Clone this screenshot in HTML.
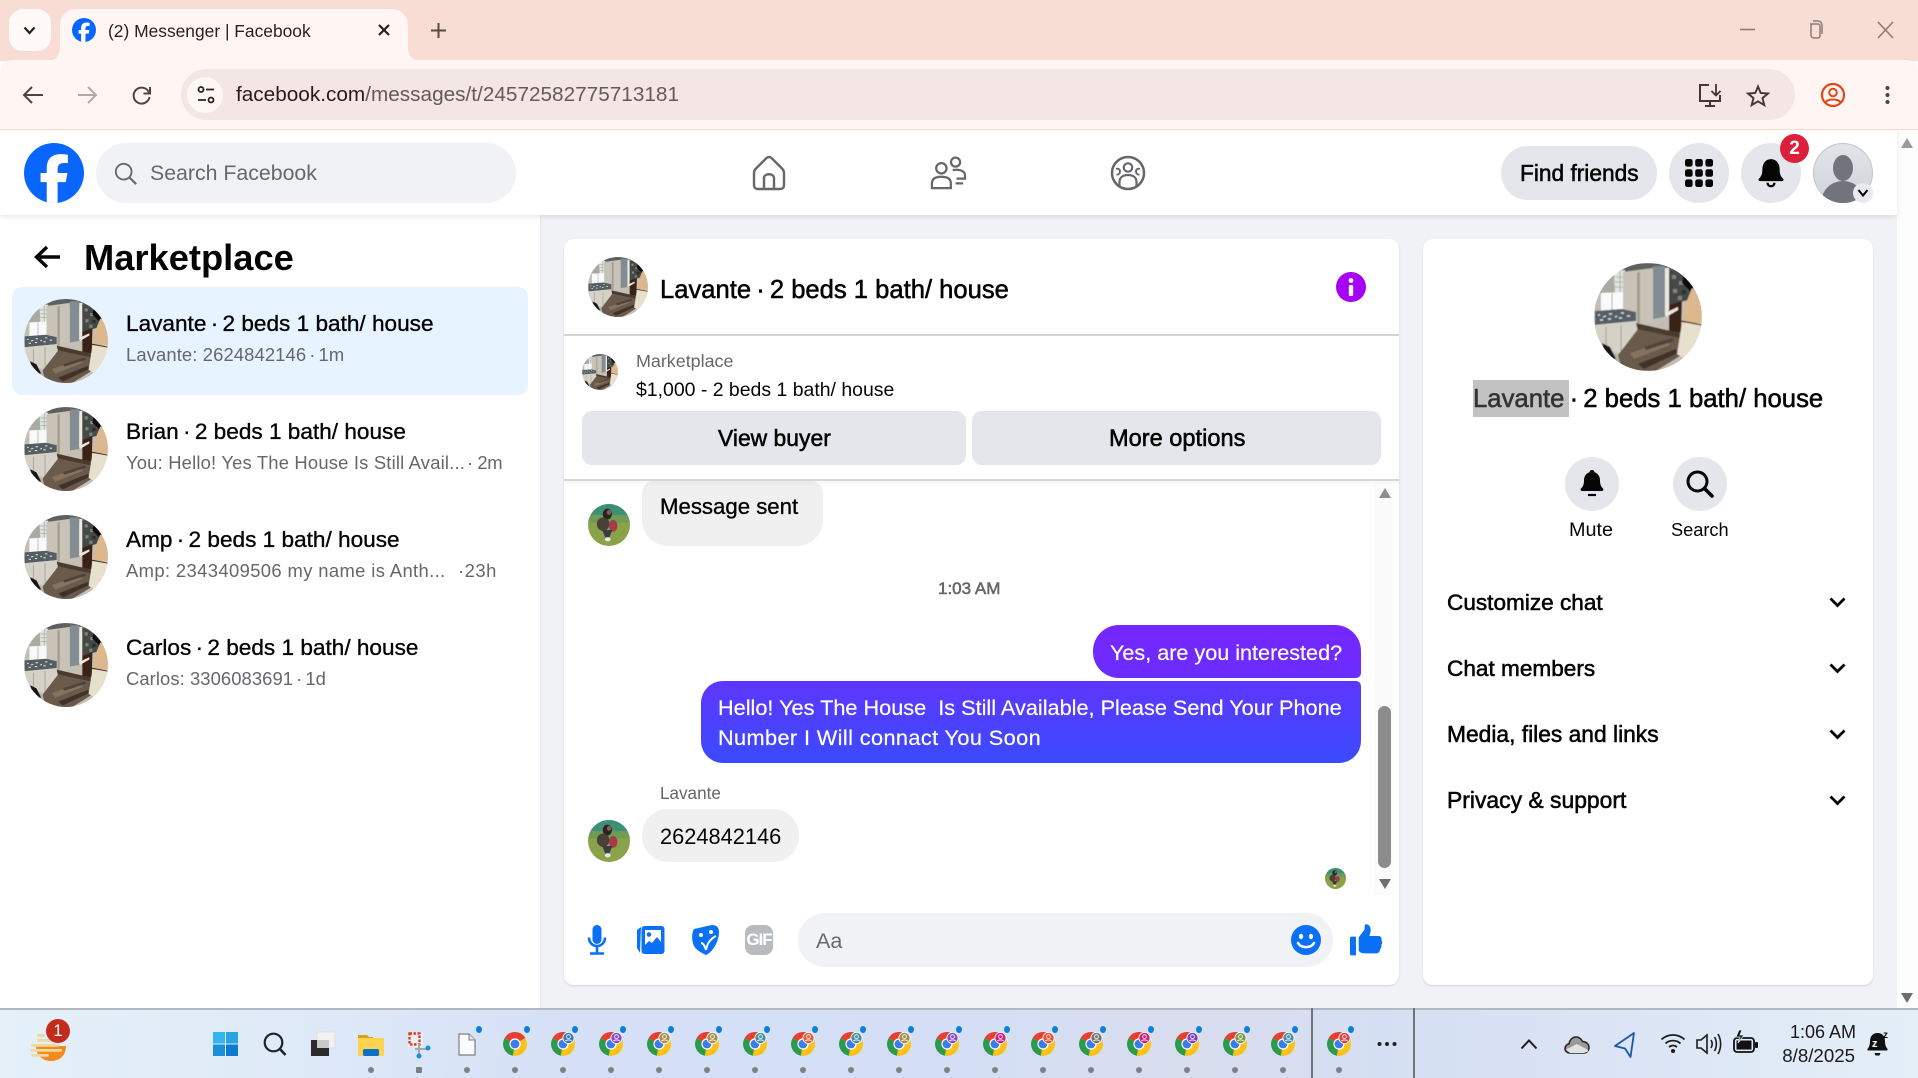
<!DOCTYPE html>
<html lang="en"><head><meta charset="utf-8"><title>(2) Messenger | Facebook</title>
<style>
html,body{margin:0;padding:0;width:1918px;height:1078px;overflow:hidden;background:#fff;font-family:"Liberation Sans",Arial,sans-serif;color:#050505}
.a{position:absolute}
.t{position:absolute;white-space:nowrap;line-height:1}
.m{-webkit-text-stroke:.35px currentColor}
.s{-webkit-text-stroke:.55px currentColor}
.w{-webkit-text-stroke:.2px currentColor}
.g{color:#65676b}
i.dt{font-style:normal;margin:0 -2px}
svg{position:absolute;overflow:visible}
.r{border-radius:50%}
.d{position:absolute;top:1067px;width:6px;height:6px;border-radius:50%;background:#7d8088}
.b{position:absolute;top:1026px;width:6px;height:7px;border-radius:50%;background:#0f7fdc}
.ch{position:absolute;top:1032px;width:24px;height:24px}
</style></head><body>
<svg width="0" height="0" style="position:absolute"><defs>
<clipPath id="cc"><circle cx="54" cy="54" r="54"/></clipPath>
<clipPath id="cw"><circle cx="50" cy="50" r="50"/></clipPath>
<filter id="soft" x="0" y="0" width="100%" height="100%"><feGaussianBlur stdDeviation=".45"/></filter>
<symbol id="house" viewBox="0 0 108 108"><g clip-path="url(#cc)"><g filter="url(#soft)">
<rect width="108" height="108" fill="#c4bfb4"/>
<rect width="108" height="10" fill="#5c6061"/>
<polygon points="0,0 29,0 29,32 0,30" fill="#a8aaa3"/>
<polygon points="20,9 31,7 31,32 21,31" fill="#dfe5df"/>
<path d="M21 14h10M21 19h10M21 24h10M26 8v24" stroke="#9aa69e" stroke-width=".8"/>
<polygon points="7,30 30,29 30,48 7,51" fill="#fafafa"/>
<path d="M18 30v20" stroke="#999" stroke-width=".8"/>
<polygon points="29,9 59,5 59,60 42,62 29,56" fill="#c9c2b6"/>
<polygon points="43,10 46,9 46,60 43,60" fill="#a39d91"/>
<polygon points="59,3 71,3 71,54 59,56" fill="#838c92"/>
<polygon points="71,5 75,5 75,46 71,52" fill="#ece9e2"/>
<polygon points="75,7 98,8 98,36 75,42" fill="#454945"/>
<polygon points="78,12 82,12 82,16 78,16" fill="#7e847d"/><polygon points="85,18 89,18 89,22 85,22" fill="#7e847d"/><polygon points="79,26 83,26 83,30 79,30" fill="#80867f"/><polygon points="88,27 92,27 92,31 88,31" fill="#2b2e2b"/><polygon points="84,33 88,33 88,37 84,37" fill="#7e847d"/>
<polygon points="90,8 102,18 98,30 88,20" fill="#0d0e10"/>
<polygon points="75,42 88,38 87,70 75,68" fill="#3a2417"/>
<polygon points="71,50 84,44 84,47 72,54" fill="#ece9e2"/>
<polygon points="1,48 28,46 42,49 42,58 1,62" fill="#555e63"/>
<path d="M4 52l2 0M9 54l3-1M15 51l3 0M21 54l2-1M27 50l3 0M33 53l3 0M6 57l3 0M14 56l3 0M25 55l3 0" stroke="#d9dfe2" stroke-width="1.400"/>
<polygon points="0,62 42,58 45,78 28,90 10,88 0,76" fill="#d6d1c6"/>
<path d="M12 64v22M27 62v26" stroke="#a09c91" stroke-width="1"/>
<polygon points="0,76 16,88 28,96 26,108 0,108" fill="#b4afa3"/>
<polygon points="42,60 86,70 86,78 44,68" fill="#4a3a2f"/>
<polygon points="24,92 44,66 86,75 86,93 62,108 28,108" fill="#6b5a4b"/>
<polygon points="36,90 72,78 76,82 40,96" fill="#86735f"/>
<polygon points="44,101 82,86 84,90 50,106" fill="#3f332a"/>
<polygon points="50,84 78,75 80,78 52,87" fill="#50423a"/>
<polygon points="98,25 108,32 108,60 88,60 92,40" fill="#dcb88f"/>
<polygon points="88,60 108,60 108,92 92,97 83,91" fill="#e6e0cd"/>
<line x1="87" y1="58" x2="108" y2="62" stroke="#2a2a26" stroke-width="1.200"/>
<polygon points="8,80 16,84 22,96 12,96" fill="#161616"/>
</g></g></symbol>
<symbol id="woman" viewBox="0 0 100 100"><g clip-path="url(#cw)">
<rect width="100" height="100" fill="#8aa248"/>
<rect width="100" height="32" fill="#3e8f78"/>
<rect y="26" width="100" height="18" fill="#6f9b55"/>
<ellipse cx="46" cy="24" rx="11" ry="13" fill="#2a2225"/>
<ellipse cx="50" cy="20" rx="5" ry="6" fill="#8a5f48"/>
<ellipse cx="36" cy="48" rx="15" ry="16" fill="#4a4038"/>
<ellipse cx="60" cy="52" rx="10" ry="14" fill="#a63a4a"/>
<polygon points="34,62 58,62 50,82 42,82" fill="#3b3b45"/>
<ellipse cx="47" cy="84" rx="7" ry="5" fill="#e8e8e8"/>
</g></symbol>
<symbol id="chrome" viewBox="0 0 24 24">
<path d="M12 12 1.600 6A12 12 0 0 1 22.400 6Z" fill="#e5402f"/>
<path d="M12 12 1.600 6A12 12 0 0 0 10 23.800Z" fill="#2c9a4b"/>
<path d="M12 12 22.400 6A12 12 0 0 1 10 23.800Z" fill="#fbc21b"/>
<circle cx="12" cy="12" r="5.600" fill="#fff"/><circle cx="12" cy="12" r="4.400" fill="#3b7de8"/>
</symbol>
<symbol id="pp" viewBox="0 0 12 12"><circle cx="6" cy="6" r="6" fill="#fff"/><circle cx="6" cy="6" r="5.200" fill="currentColor"/><circle cx="6" cy="4.600" r="1.900" fill="none" stroke="#fff" stroke-width=".8"/><path d="M2.900 9.200c.6-1.700 5.600-1.700 6.200 0" fill="none" stroke="#fff" stroke-width=".8"/></symbol>
</defs></svg>

<!-- tab strip -->
<div class="a" style="left:0;top:0;width:1918px;height:61px;background:#f8ddd4"></div>
<div class="a" style="left:9px;top:9px;width:42px;height:42px;border-radius:14px;background:#fff9f7"></div>
<svg style="left:22px;top:23px" width="15" height="15" viewBox="0 0 15 15"><path d="M2.500 4.500 7.500 10l5-5.500" fill="none" stroke="#2b1f1b" stroke-width="2.200"/></svg>
<div class="a" style="left:60px;top:9px;width:348px;height:52px;background:#fff5f2;border-radius:16px 16px 0 0"></div>
<svg style="left:46px;top:46px" width="376" height="15" viewBox="0 0 376 15"><path d="M0 15C10 15 14 10 14 0V15Z" fill="#fff5f2"/><path d="M376 15C366 15 362 10 362 0V15Z" fill="#fff5f2"/></svg>
<svg style="left:72px;top:18px" width="24" height="24" viewBox="0 0 36 36"><circle cx="18" cy="18" r="18" fill="#0866ff"/><path d="M25.040 23.500 26.050 18h-5.880v-1.940c0-2.910 1.140-4.030 4.090-4.030.92 0 1.650.02 2.080.07V7.120c-.8-.23-2.770-.45-3.910-.45-6.020 0-8.790 2.830-8.790 8.960V18H9.940v5.500h3.710v11.970c1.390.35 2.850.53 4.350.53.73 0 1.450-.05 2.170-.13V23.500z" fill="#fff"/></svg>
<div class="t" style="left:108px;top:23px;font-size:17.400px;color:#2b1f1b">(2) Messenger | Facebook</div>
<svg style="left:377px;top:23px" width="14" height="14" viewBox="0 0 14 14"><path d="M2 2 12 12M12 2 2 12" stroke="#2b1f1b" stroke-width="2.200"/></svg>
<svg style="left:430px;top:22px" width="17" height="17" viewBox="0 0 17 17"><path d="M8.500 1v15M1 8.500h15" stroke="#5a4a45" stroke-width="2"/></svg>
<svg style="left:1738px;top:20px" width="150" height="20" viewBox="0 0 150 20">
<path d="M2 9.500h15" stroke="#8a7d79" stroke-width="1.600"/>
<path d="M72 4h8a2 2 0 0 1 2 2v10a2 2 0 0 1-2 2h-4a3 3 0 0 1-3-3V6a2 2 0 0 1 2-2z" fill="none" stroke="#8a7d79" stroke-width="1.500"/><path d="M75 1h5a4 4 0 0 1 4 4v9" fill="none" stroke="#8a7d79" stroke-width="1.500"/>
<path d="M140 2 155 18M155 2 140 18" stroke="#8a7d79" stroke-width="1.600"/></svg>

<!-- toolbar -->
<div class="a" style="left:0;top:60px;width:1918px;height:69px;background:#fff5f2;border-radius:12px 12px 0 0;border-bottom:1.500px solid #f8ddd4"></div>
<svg style="left:21px;top:83px" width="134" height="24" viewBox="0 0 134 24">
<path d="M22 12H4M11 4l-8 8 8 8" fill="none" stroke="#54433d" stroke-width="2"/>
<path d="M57 12h18M67 4l8 8-8 8" fill="none" stroke="#b5a8a3" stroke-width="2"/>
<path d="M128 9.500A8 8 0 1 0 128.500 14" fill="none" stroke="#54433d" stroke-width="2"/><path d="M129 4v6.500h-6.500" fill="none" stroke="#54433d" stroke-width="2"/></svg>
<div class="a" style="left:181px;top:69px;width:1614px;height:51px;border-radius:26px;background:#f3e6e4"></div>
<div class="a r" style="left:187px;top:77px;width:36px;height:36px;background:#fff7f5"></div>
<svg style="left:196px;top:85px" width="20" height="20" viewBox="0 0 20 20"><circle cx="5" cy="4.500" r="2.500" fill="none" stroke="#2b1f1b" stroke-width="1.800"/><path d="M10 4.500h8M2 15h8" stroke="#2b1f1b" stroke-width="1.800"/><circle cx="15" cy="15" r="2.500" fill="none" stroke="#2b1f1b" stroke-width="1.800"/></svg>
<div class="t" style="left:236px;top:85px;font-size:20.750px;color:#655a57"><span style="color:#281c18">facebook.com</span>/messages/t/24572582775713181</div>
<svg style="left:1698px;top:83px" width="200" height="26" viewBox="0 0 200 26">
<path d="M11 2H2v16h20v-6M12 18v4M7 23h10" fill="none" stroke="#45362f" stroke-width="2"/><path d="M18 1v11M13.500 8l4.500 4.500L22.500 8" fill="none" stroke="#45362f" stroke-width="1.800"/>
<path d="M60 3.500 62.700 10l7.300.5-5.500 4.600 1.800 7-6.300-3.800-6.300 3.800 1.800-7-5.500-4.600 7.300-.5z" fill="none" stroke="#45362f" stroke-width="1.900"/>
<circle cx="135" cy="12" r="11" fill="none" stroke="#e0481a" stroke-width="2.200"/><circle cx="135" cy="9.500" r="3.800" fill="none" stroke="#e0481a" stroke-width="2"/><path d="M127.500 19.500c1.500-4 13.500-4 15 0" fill="none" stroke="#e0481a" stroke-width="2"/>
<circle cx="189.500" cy="5" r="2" fill="#54433d"/><circle cx="189.500" cy="12" r="2" fill="#54433d"/><circle cx="189.500" cy="19" r="2" fill="#54433d"/></svg>

<!-- body -->
<div class="a" style="left:0;top:130px;width:1897px;height:878px;background:#f1f2f6"></div>
<div class="a" style="left:1897px;top:130px;width:21px;height:878px;background:#fdfdfd"></div>
<svg style="left:1900px;top:137px" width="14" height="12" viewBox="0 0 14 12"><path d="M7 1 13 11H1z" fill="#9a9a9a"/></svg>
<svg style="left:1900px;top:992px" width="14" height="12" viewBox="0 0 14 12"><path d="M7 11 13 1H1z" fill="#6d6d6d"/></svg>

<!-- sidebar -->
<div class="a" style="left:0;top:215px;width:540px;height:793px;background:#fff;border-right:1px solid #e4e6eb"></div>
<!-- fb header -->
<div class="a" style="left:0;top:130px;width:1897px;height:85px;background:#fff;box-shadow:0 2px 5px rgba(0,0,0,.09)"></div>
<svg style="left:24px;top:143px" width="60" height="60" viewBox="0 0 36 36"><circle cx="18" cy="18" r="18" fill="#0866ff"/><path d="M25.040 23.500 26.050 18h-5.880v-1.940c0-2.910 1.140-4.030 4.090-4.030.92 0 1.650.02 2.080.07V7.120c-.8-.23-2.770-.45-3.910-.45-6.020 0-8.790 2.830-8.790 8.960V18H9.940v5.500h3.710v11.970c1.390.35 2.850.53 4.350.53.73 0 1.450-.05 2.170-.13V23.500z" fill="#fff"/></svg>
<div class="a" style="left:96px;top:143px;width:420px;height:60px;border-radius:30px;background:#f0f2f5"></div>
<svg style="left:114px;top:162px" width="24" height="24" viewBox="0 0 26 26"><circle cx="10.500" cy="10.500" r="8.500" fill="none" stroke="#65676b" stroke-width="2"/><path d="M16.500 16.500 24 24" stroke="#65676b" stroke-width="2.400"/></svg>
<div class="t g" style="left:150px;top:163px;font-size:21.300px">Search Facebook</div>
<svg style="left:752px;top:155px" width="34" height="36" viewBox="0 0 34 36"><path d="M17 2c-1 0-2 .6-3 1.500L4 13.500C2.500 15 2 16 2 18v12c0 2.800 1.700 4 4 4h22c2.300 0 4-1.200 4-4V18c0-2-.5-3-2-4.500L20 3.500C19 2.600 18 2 17 2z" fill="none" stroke="#65676b" stroke-width="2.400"/><path d="M12 34V23c0-5 10-5 10 0v11" fill="none" stroke="#65676b" stroke-width="2.400"/></svg>
<svg style="left:930px;top:156px" width="36" height="34" viewBox="0 0 38 36"><circle cx="12" cy="13" r="5.500" fill="none" stroke="#65676b" stroke-width="2.400"/><path d="M2 34V29c0-5 4-7 10-7s10 2 10 7v5z" fill="none" stroke="#65676b" stroke-width="2.400"/><circle cx="27" cy="6.500" r="4.800" fill="none" stroke="#65676b" stroke-width="2.400"/><path d="M24 15c3-.8 13-1 13 5.500V24h-9M27 29h8" fill="none" stroke="#65676b" stroke-width="2.400"/></svg>
<svg style="left:1110px;top:155px" width="36" height="36" viewBox="0 0 36 36"><circle cx="18" cy="18" r="16" fill="none" stroke="#65676b" stroke-width="2.500"/><circle cx="18" cy="12.500" r="4.200" fill="none" stroke="#65676b" stroke-width="2.200"/><path d="M6 14c2.500-1 4 .5 4 2.500s-1.500 3.500-3.500 3M30 14c-2.500-1-4 .5-4 2.500s1.500 3.500 3.500 3" fill="none" stroke="#65676b" stroke-width="1.900"/><path d="M9.500 31v-4c0-5 4-7 8.500-7s8.500 2 8.500 7v4" fill="none" stroke="#65676b" stroke-width="2.200"/></svg>
<div class="a" style="left:1501px;top:146px;width:156px;height:54px;border-radius:27px;background:#e4e6eb"></div>
<div class="t s" style="left:1520px;top:162px;font-size:22.700px">Find friends</div>
<div class="a r" style="left:1669px;top:143px;width:60px;height:60px;background:#e4e6eb"></div>
<svg style="left:1685px;top:159px" width="28" height="28" viewBox="0 0 28 28" fill="#050505"><rect x="0" y="0" width="7.600" height="7.600" rx="2.200"/><rect x="10.200" y="0" width="7.600" height="7.600" rx="2.200"/><rect x="20.400" y="0" width="7.600" height="7.600" rx="2.200"/><rect x="0" y="10.200" width="7.600" height="7.600" rx="2.200"/><rect x="10.200" y="10.200" width="7.600" height="7.600" rx="2.200"/><rect x="20.400" y="10.200" width="7.600" height="7.600" rx="2.200"/><rect x="0" y="20.400" width="7.600" height="7.600" rx="2.200"/><rect x="10.200" y="20.400" width="7.600" height="7.600" rx="2.200"/><rect x="20.400" y="20.400" width="7.600" height="7.600" rx="2.200"/></svg>
<div class="a r" style="left:1741px;top:143px;width:60px;height:60px;background:#e4e6eb"></div>
<svg style="left:1757px;top:158px" width="28" height="30" viewBox="0 0 24 26"><path d="M12 1c4.800 0 7.500 4 7.500 9 0 4 1 6 3 8 .7.800.2 2-.8 2H2.300c-1 0-1.500-1.200-.8-2 2-2 3-4 3-8 0-5 2.700-9 7.500-9z" fill="#050505"/><path d="M9 21.500a3 3 0 0 0 6 0" fill="none" stroke="#050505" stroke-width="2"/></svg>
<div class="a r" style="left:1780px;top:134px;width:29px;height:29px;background:#dd1f3c;color:#fff;font-weight:bold;font-size:19px;line-height:29px;text-align:center">2</div>
<div class="a r" style="left:1813px;top:143px;width:60px;height:60px;background:linear-gradient(180deg,#e2e5e8,#cfd3d8);box-shadow:inset 0 0 0 1px #c4c7cb;overflow:hidden"><div class="a r" style="left:20px;top:12px;width:20px;height:26px;background:#71747a"></div><div class="a" style="left:8px;top:38px;width:44px;height:30px;border-radius:22px 22px 0 0;background:#71747a"></div></div>
<div class="a r" style="left:1853px;top:183px;width:20px;height:20px;background:#e8eaed"></div>
<svg style="left:1857px;top:188px" width="12" height="10" viewBox="0 0 12 10"><path d="M1.500 2 6 7.500 10.500 2" fill="none" stroke="#050505" stroke-width="2"/></svg>

<!-- left list -->
<svg style="left:33px;top:243px" width="28" height="28" viewBox="0 0 28 28"><path d="M27 14H4M14 4 3.500 14 14 24" fill="none" stroke="#050505" stroke-width="3.400"/></svg>
<div class="t" style="left:84px;top:240px;font-size:36.300px;font-weight:bold">Marketplace</div>
<div class="a" style="left:12px;top:287px;width:516px;height:108px;border-radius:10px;background:#e7f3ff"></div>
<svg style="left:24px;top:299px" width="84" height="84"><use href="#house" width="84" height="84"/></svg>
<svg style="left:24px;top:407px" width="84" height="84"><use href="#house" width="84" height="84"/></svg>
<svg style="left:24px;top:515px" width="84" height="84"><use href="#house" width="84" height="84"/></svg>
<svg style="left:24px;top:623px" width="84" height="84"><use href="#house" width="84" height="84"/></svg>
<div class="t m" style="left:126px;top:313px;font-size:22.600px">Lavante <i class="dt">·</i> 2 beds 1 bath/ house</div>
<div class="t g" style="left:126px;top:346px;font-size:18.400px;letter-spacing:.12px">Lavante: 2624842146<span style="margin:0 3px">·</span>1m</div>
<div class="t m" style="left:126px;top:421px;font-size:22.600px">Brian <i class="dt">·</i> 2 beds 1 bath/ house</div>
<div class="t g" style="left:126px;top:454px;font-size:18.400px;letter-spacing:.19px">You: Hello! Yes The House Is Still Avail...</div>
<div class="t g" style="left:467px;top:454px;font-size:18.400px;letter-spacing:-.4px">· 2m</div>
<div class="t m" style="left:126px;top:529px;font-size:22.600px">Amp <i class="dt">·</i> 2 beds 1 bath/ house</div>
<div class="t g" style="left:126px;top:562px;font-size:18.400px;letter-spacing:.38px">Amp: 2343409506 my name is Anth...</div>
<div class="t g" style="left:458px;top:562px;font-size:18.400px;letter-spacing:.5px">·23h</div>
<div class="t m" style="left:126px;top:637px;font-size:22.600px">Carlos <i class="dt">·</i> 2 beds 1 bath/ house</div>
<div class="t g" style="left:126px;top:670px;font-size:18.400px;letter-spacing:.08px">Carlos: 3306083691<span style="margin:0 3px">·</span>1d</div>

<!-- center panel -->
<div class="a" style="left:564px;top:239px;width:835px;height:746px;border-radius:10px;background:#fff;box-shadow:0 1px 2px rgba(0,0,0,.12)"></div>
<svg style="left:588px;top:257px" width="60" height="60"><use href="#house" width="60" height="60"/></svg>
<div class="t s" style="left:660px;top:278px;font-size:25.600px">Lavante <i class="dt">·</i> 2 beds 1 bath/ house</div>
<svg style="left:1336px;top:272px" width="30" height="30" viewBox="0 0 30 30"><circle cx="15" cy="15" r="15" fill="#a600f5"/><circle cx="15" cy="8.500" r="2.400" fill="#fff"/><rect x="12.800" y="13" width="4.400" height="11" rx="1.500" fill="#fff"/></svg>
<div class="a" style="left:564px;top:334px;width:835px;height:2px;background:#d3d4d6"></div>
<svg style="left:582px;top:354px" width="36" height="36"><use href="#house" width="36" height="36"/></svg>
<div class="t g" style="left:636px;top:353px;font-size:17.900px">Marketplace</div>
<div class="t" style="left:636px;top:381px;font-size:19.450px">$1,000 - 2 beds 1 bath/ house</div>
<div class="a" style="left:582px;top:411px;width:384px;height:54px;border-radius:10px;background:#e4e6eb"></div>
<div class="a" style="left:972px;top:411px;width:409px;height:54px;border-radius:10px;background:#e4e6eb"></div>
<div class="t s" style="left:718px;top:427px;font-size:22.900px">View buyer</div>
<div class="t s" style="left:1109px;top:428px;font-size:23.600px">More options</div>
<div class="a" style="left:1374px;top:482px;width:18px;height:413px;background:#fbfbfb"></div>
<svg style="left:1378px;top:487px" width="14" height="12" viewBox="0 0 14 12"><path d="M7 1 13 11H1z" fill="#8f8f8f"/></svg>
<div class="a" style="left:1378px;top:706px;width:13px;height:162px;border-radius:7px;background:#8c8c8c"></div>
<svg style="left:1378px;top:878px" width="14" height="12" viewBox="0 0 14 12"><path d="M7 11 13 1H1z" fill="#6f6f6f"/></svg>
<div class="a" style="left:642px;top:481px;width:181px;height:65px;border-radius:12px 12px 26px 26px;background:#f0f0f0"></div>
<div class="a" style="left:564px;top:479px;width:835px;height:2px;background:#d6d7d9;box-shadow:0 2px 4px rgba(0,0,0,.08)"></div>
<svg style="left:588px;top:504px" width="42" height="42"><use href="#woman" width="42" height="42"/></svg>
<div class="t m" style="left:660px;top:496px;font-size:22.200px">Message sent</div>
<div class="t g s" style="left:938px;top:580px;font-size:17px">1:03 AM</div>
<div class="a" style="left:1093px;top:625px;width:268px;height:53px;border-radius:26px 26px 5px 26px;background:linear-gradient(180deg,#7526ff,#6a2dff)"></div>
<div class="t w" style="left:1110px;top:642px;font-size:21.600px;color:#fff">Yes, are you interested?</div>
<div class="a" style="left:701px;top:681px;width:660px;height:82px;border-radius:22px 5px 22px 22px;background:linear-gradient(180deg,#5f36ff,#3a4bff)"></div>
<div class="t w" style="left:718px;top:697px;font-size:21.700px;color:#fff;white-space:pre">Hello! Yes The House  Is Still Available, Please Send Your Phone</div>
<div class="t w" style="left:718px;top:727px;font-size:21.700px;letter-spacing:.4px;color:#fff">Number I Will connact You Soon</div>
<div class="t g" style="left:660px;top:785px;font-size:17.100px">Lavante</div>
<div class="a" style="left:642px;top:809px;width:157px;height:53px;border-radius:26px;background:#f0f0f0"></div>
<div class="t" style="left:660px;top:826px;font-size:21.800px">2624842146</div>
<svg style="left:588px;top:820px" width="42" height="42"><use href="#woman" width="42" height="42"/></svg>
<svg style="left:1325px;top:868px" width="21" height="21"><use href="#woman" width="21" height="21"/></svg>
<!-- composer -->
<svg style="left:587px;top:925px" width="20" height="30" viewBox="0 0 20 30"><rect x="5.500" y="0" width="9" height="19" rx="4.500" fill="#0a70f5"/><path d="M2 12.500c0 5 3.500 8.500 8 8.500s8-3.500 8-8.500M10 21v7M3 28.500h14" fill="none" stroke="#0a70f5" stroke-width="2.600"/></svg>
<svg style="left:637px;top:925px" width="28" height="30" viewBox="0 0 28 30"><path d="M4 2 0 5v18l3 5z" fill="#0a70f5"/><rect x="4.500" y="1" width="23" height="28" rx="3" fill="#0a70f5"/><path d="M8 5h16v12l-4-5-5 6-3-2-4 4z" fill="#fff"/><circle cx="12" cy="9.500" r="2.300" fill="#0a70f5"/></svg>
<svg style="left:691px;top:925px" width="28" height="30" viewBox="0 0 28 30"><path d="M3 4 21 0c4 0 7 2 7 7 0 9-6 20-13 23C11 28 5 25 3 21 1 17 0 9 3 4z" fill="#0a70f5"/><circle cx="10" cy="10" r="2" fill="#fff"/><circle cx="20" cy="7" r="2" fill="#fff"/><path d="M10 18c2 0 4 3 5 7M25 11c-6 3-9 8-10 14" fill="none" stroke="#fff" stroke-width="2"/></svg>
<div class="a" style="left:745px;top:925px;width:28px;height:30px;border-radius:8px;background:#b8bbbf;color:#fff;font-weight:bold;font-size:17px;line-height:30px;text-align:center;letter-spacing:-1px">GIF</div>
<div class="a" style="left:798px;top:913px;width:535px;height:54px;border-radius:27px;background:#f0f2f5"></div>
<div class="t g" style="left:816px;top:931px;font-size:21.500px">Aa</div>
<svg style="left:1291px;top:925px" width="30" height="30" viewBox="0 0 30 30"><circle cx="15" cy="15" r="15" fill="#0a70f5"/><ellipse cx="10" cy="11.500" rx="2.100" ry="2.700" fill="#fff"/><ellipse cx="20" cy="11.500" rx="2.100" ry="2.700" fill="#fff"/><path d="M7 18c3 5.500 13 5.500 16 0" fill="none" stroke="#fff" stroke-width="2.500" stroke-linecap="round"/></svg>
<svg style="left:1350px;top:924px" width="32" height="32" viewBox="0 0 24 24"><path d="M0 10.500c0-.6.400-1 1-1h3.500v14H1c-.6 0-1-.4-1-1z" fill="#0a70f5"/><path d="M6.500 10 11 4V1.500c0-1 .8-1.500 1.600-1.300 2 .5 2.900 2.300 2.900 4.300 0 1.400-.4 3-1 4.500h6.700c2 0 3 1.700 2.300 3.300.9 1 .9 2.600-.1 3.500.5 1.200.1 2.500-1 3.200.2 1.700-1 3-2.700 3H11c-2 0-4.500-.8-4.500-2.500z" fill="#0a70f5"/></svg>

<!-- right panel -->
<div class="a" style="left:1423px;top:239px;width:450px;height:746px;border-radius:10px;background:#fff;box-shadow:0 1px 2px rgba(0,0,0,.12)"></div>
<svg style="left:1594px;top:263px" width="108" height="108"><use href="#house" width="108" height="108"/></svg>
<div class="a" style="left:1473px;top:380px;width:96px;height:37px;background:#c2c2c2"></div>
<div class="t s" style="left:1473px;top:387px;font-size:25.700px"><span style="color:#333">Lavante</span> <i class="dt">·</i> 2 beds 1 bath/ house</div>
<div class="a r" style="left:1565px;top:457px;width:54px;height:54px;background:#e4e6eb"></div>
<div class="a r" style="left:1673px;top:457px;width:54px;height:54px;background:#e4e6eb"></div>
<svg style="left:1580px;top:470px" width="24" height="28" viewBox="0 0 24 28"><path d="M12 0c1.500 0 2.300 1 2.500 2.300C18 3.500 20 6.500 20 10.500c0 4 1 6 3 8 .8.900.3 2.500-1 2.500H2c-1.300 0-1.800-1.600-1-2.500 2-2 3-4 3-8C4 6.500 6 3.500 9.500 2.300 9.700 1 10.500 0 12 0z" fill="#050505"/><path d="M8 25h8" stroke="#050505" stroke-width="2.200"/></svg>
<svg style="left:1686px;top:470px" width="28" height="28" viewBox="0 0 28 28"><circle cx="11.500" cy="11.500" r="9.500" fill="none" stroke="#050505" stroke-width="3"/><path d="M18.500 18.500 26 26" stroke="#050505" stroke-width="3.600" stroke-linecap="round"/></svg>
<div class="t" style="left:1569px;top:521px;font-size:19.800px">Mute</div>
<div class="t" style="left:1671px;top:521px;font-size:18.200px">Search</div>
<div class="t s" style="left:1447px;top:592px;font-size:22.600px">Customize chat</div>
<div class="t s" style="left:1447px;top:658px;font-size:22.600px">Chat members</div>
<div class="t s" style="left:1447px;top:723px;font-size:22.800px">Media, files and links</div>
<div class="t s" style="left:1447px;top:789px;font-size:22.900px">Privacy &amp; support</div>
<svg style="left:1829px;top:597px" width="17" height="211" viewBox="0 0 17 211"><g fill="none" stroke="#050505" stroke-width="2.800"><path d="M1.500 1.500 8.500 8.500l7-7"/><path d="M1.500 67.500 8.500 74.500l7-7"/><path d="M1.500 133.500 8.500 140.500l7-7"/><path d="M1.500 199.500 8.500 206.500l7-7"/></g></svg>

<!-- taskbar -->
<div class="a" style="left:0;top:1008px;width:1918px;height:70px;box-sizing:border-box;border-top:2px solid #b3b7bf;background:linear-gradient(90deg,#e5f0f9 0,#dfeaf8 15%,#d5e0f6 30%,#d4dff5 50%,#d9deee 62%,#d5dff3 72%,#dbe5f5 85%,#e4eff8 100%)"></div>
<svg style="left:28px;top:1024px" width="42" height="40" viewBox="0 0 42 40"><path d="M8 22h30c0 9-6 15-15 15S8 31 8 22z" fill="#f28a1e"/><g fill="#ecd9a2"><rect x="3" y="20" width="28" height="2.800" rx="1.400"/><rect x="2" y="25" width="32" height="2.800" rx="1.400"/><rect x="3" y="30" width="18" height="2.800" rx="1.400"/><rect x="9" y="15" width="22" height="2.800" rx="1.400"/><rect x="9" y="10" width="8" height="2.800" rx="1.400"/></g></svg>
<div class="a r" style="left:46px;top:1019px;width:24px;height:24px;background:#c42b1c;color:#fff;font-size:17px;line-height:24px;text-align:center">1</div>
<svg style="left:213px;top:1032px" width="25" height="24" viewBox="0 0 25 24"><rect width="12" height="11.500" fill="#34b4ee"/><rect x="13" width="12" height="11.500" fill="#2aa3e6"/><rect y="12.500" width="12" height="11.500" fill="#1a8fdc"/><rect x="13" y="12.500" width="12" height="11.500" fill="#0f78cf"/></svg>
<svg style="left:263px;top:1032px" width="24" height="24" viewBox="0 0 24 24"><circle cx="10.500" cy="10.500" r="8.800" fill="none" stroke="#1f2226" stroke-width="2.200"/><path d="M16.500 16.500 22.500 23" stroke="#1f2226" stroke-width="2.600"/></svg>
<svg style="left:311px;top:1032px" width="24" height="24" viewBox="0 0 24 24"><rect x="6" y="0" width="18" height="16" fill="#f2f2f2" stroke="#dfdfdf"/><rect x="0" y="8" width="18" height="16" fill="#2a2a2a"/><rect x="6" y="8" width="12" height="8" fill="#c9c9c9"/></svg>
<svg style="left:358px;top:1033px" width="26" height="23" viewBox="0 0 26 23"><path d="M0 2h9l2 2h4v5H0z" fill="#d9a112"/><rect x="0" y="5" width="26" height="18" rx="1" fill="#ffd352"/><rect x="5" y="16" width="16" height="7" rx="1.500" fill="#0f6fc4"/></svg>
<svg style="left:407px;top:1032px" width="24" height="26" viewBox="0 0 24 26"><rect x="1" y="0" width="15" height="15" fill="#efefef"/><path d="M2.500 1.500h10v11h-10z" fill="none" stroke="#d93a2b" stroke-width="2.400" stroke-dasharray="2.500 1.500"/><path d="M12 12v12M8 17h15" stroke="#a3a8ae" stroke-width="2"/><circle cx="21" cy="16" r="2.500" fill="#1a8fdc"/><circle cx="12" cy="24" r="2.500" fill="#1a8fdc"/></svg>
<svg style="left:458px;top:1033px" width="18" height="23" viewBox="0 0 18 23"><path d="M1 1h10l6 6v15H1z" fill="#fbfbfb" stroke="#7b7f85" stroke-width="1.200"/><path d="M11 1v6h6" fill="#e4e4e4" stroke="#7b7f85" stroke-width="1"/></svg>
<div class="b" style="left:476px"></div><div class="b" style="left:524px"></div><div class="b" style="left:572px"></div><div class="b" style="left:620px"></div><div class="b" style="left:668px"></div><div class="b" style="left:716px"></div><div class="b" style="left:764px"></div><div class="b" style="left:812px"></div><div class="b" style="left:860px"></div><div class="b" style="left:908px"></div><div class="b" style="left:956px"></div><div class="b" style="left:1004px"></div><div class="b" style="left:1052px"></div><div class="b" style="left:1100px"></div><div class="b" style="left:1148px"></div><div class="b" style="left:1196px"></div><div class="b" style="left:1244px"></div><div class="b" style="left:1292px"></div><div class="b" style="left:1348px"></div>
<div class="d" style="left:368px"></div><div class="d" style="left:416px;border-radius:1px"></div><div class="d" style="left:464px"></div><div class="d" style="left:512px"></div><div class="d" style="left:560px"></div><div class="d" style="left:608px"></div><div class="d" style="left:656px"></div><div class="d" style="left:704px"></div><div class="d" style="left:752px"></div><div class="d" style="left:800px"></div><div class="d" style="left:848px"></div><div class="d" style="left:896px"></div><div class="d" style="left:944px"></div><div class="d" style="left:992px"></div><div class="d" style="left:1040px"></div><div class="d" style="left:1088px"></div><div class="d" style="left:1136px"></div><div class="d" style="left:1184px"></div><div class="d" style="left:1232px"></div><div class="d" style="left:1280px"></div><div class="d" style="left:1336px"></div>
<svg class="ch" style="left:503px"><use href="#chrome" width="24" height="24"/></svg>
<svg class="ch" style="left:551px;color:#3a7ab8"><use href="#chrome" width="24" height="24"/><use href="#pp" x="11.500" y="0" width="12" height="12"/></svg>
<svg class="ch" style="left:599px;color:#8a4fc7"><use href="#chrome" width="24" height="24"/><use href="#pp" x="11.500" y="0" width="12" height="12"/></svg>
<svg class="ch" style="left:647px;color:#a89050"><use href="#chrome" width="24" height="24"/><use href="#pp" x="11.500" y="0" width="12" height="12"/></svg>
<svg class="ch" style="left:695px;color:#a89050"><use href="#chrome" width="24" height="24"/><use href="#pp" x="11.500" y="0" width="12" height="12"/></svg>
<svg class="ch" style="left:743px;color:#4a8fa0"><use href="#chrome" width="24" height="24"/><use href="#pp" x="11.500" y="0" width="12" height="12"/></svg>
<svg class="ch" style="left:791px;color:#e0603a"><use href="#chrome" width="24" height="24"/><use href="#pp" x="11.500" y="0" width="12" height="12"/></svg>
<svg class="ch" style="left:839px;color:#4a8fa0"><use href="#chrome" width="24" height="24"/><use href="#pp" x="11.500" y="0" width="12" height="12"/></svg>
<svg class="ch" style="left:887px;color:#a09050"><use href="#chrome" width="24" height="24"/><use href="#pp" x="11.500" y="0" width="12" height="12"/></svg>
<svg class="ch" style="left:935px;color:#8a50c0"><use href="#chrome" width="24" height="24"/><use href="#pp" x="11.500" y="0" width="12" height="12"/></svg>
<svg class="ch" style="left:983px;color:#d02080"><use href="#chrome" width="24" height="24"/><use href="#pp" x="11.500" y="0" width="12" height="12"/></svg>
<svg class="ch" style="left:1031px;color:#e85030"><use href="#chrome" width="24" height="24"/><use href="#pp" x="11.500" y="0" width="12" height="12"/></svg>
<svg class="ch" style="left:1079px;color:#777"><use href="#chrome" width="24" height="24"/><use href="#pp" x="11.500" y="0" width="12" height="12"/></svg>
<svg class="ch" style="left:1127px;color:#d0207a"><use href="#chrome" width="24" height="24"/><use href="#pp" x="11.500" y="0" width="12" height="12"/></svg>
<svg class="ch" style="left:1175px;color:#8040c0"><use href="#chrome" width="24" height="24"/><use href="#pp" x="11.500" y="0" width="12" height="12"/></svg>
<svg class="ch" style="left:1223px;color:#7a9a50"><use href="#chrome" width="24" height="24"/><use href="#pp" x="11.500" y="0" width="12" height="12"/></svg>
<svg class="ch" style="left:1271px;color:#4a90a0"><use href="#chrome" width="24" height="24"/><use href="#pp" x="11.500" y="0" width="12" height="12"/></svg>
<svg class="ch" style="left:1327px;color:#e04040"><use href="#chrome" width="24" height="24"/><use href="#pp" x="11.500" y="0" width="12" height="12"/></svg>
<div class="a" style="left:1311px;top:1008px;width:2px;height:70px;background:#6f737d"></div>
<div class="a" style="left:1413px;top:1008px;width:2px;height:70px;background:#6f737d"></div>
<svg style="left:1377px;top:1041px" width="20" height="6" viewBox="0 0 20 6" fill="#222"><circle cx="2.500" cy="3" r="2"/><circle cx="10" cy="3" r="2"/><circle cx="17.500" cy="3" r="2"/></svg>
<svg style="left:1520px;top:1038px" width="18" height="12" viewBox="0 0 18 12"><path d="M1.500 10.500 9 2.500l7.500 8" fill="none" stroke="#1d1d1d" stroke-width="2"/></svg>
<svg style="left:1564px;top:1034px" width="26" height="20" viewBox="0 0 26 20"><path d="M6 19c-3 0-5-2-5-4.500S3 10 5 10c.5-4 3.500-7 7-7 3 0 5 1.500 6.500 4.500 3.500 0 6.500 2.500 6.500 6 0 3-2.500 5.500-5 5.500z" fill="#9a9a9a" stroke="#222" stroke-width="1.500"/><path d="M2 15.500 13 10l11 6v1.500l-4 1.500H6z" fill="#e2e2e2"/></svg>
<svg style="left:1613px;top:1031px" width="23" height="27" viewBox="0 0 23 27"><path d="M21 2 2 15l10 2.500L17.500 26z" fill="none" stroke="#1c57a8" stroke-width="1.800" stroke-linejoin="round"/></svg>
<svg style="left:1660px;top:1032px" width="26" height="22" viewBox="0 0 26 22"><g fill="none" stroke="#1d1d1d" stroke-width="1.800"><path d="M1.500 7.500c6.500-6 16.500-6 23 0"/><path d="M5.500 11.500c4-3.800 11-3.800 15 0"/><path d="M9 15c2.500-2 5.500-2 8 0"/></g><circle cx="13" cy="19" r="2" fill="#1d1d1d"/></svg>
<svg style="left:1696px;top:1032px" width="26" height="24" viewBox="0 0 26 24"><path d="M1 8h4l6-5v18l-6-5H1z" fill="none" stroke="#1d1d1d" stroke-width="1.600"/><g fill="none" stroke="#1d1d1d" stroke-width="1.600"><path d="M15 8c1.500 2.500 1.500 5.500 0 8"/><path d="M18.500 5c2.500 4 2.500 10 0 14"/><path d="M22 2c3.500 6 3.500 14 0 20"/></g></svg>
<svg style="left:1733px;top:1030px" width="26" height="26" viewBox="0 0 26 26"><rect x="1" y="8" width="20" height="14" rx="3" fill="none" stroke="#111" stroke-width="1.800"/><rect x="3.500" y="10.500" width="15" height="9" fill="#111"/><rect x="22" y="12" width="3" height="6" rx="1" fill="#111"/><path d="M6 0 3 7h4l-2 6 6-8H7l2-5z" fill="#111" stroke="#e2ecf7" stroke-width=".8"/></svg>
<div class="t" style="left:1789px;top:1023px;width:67px;text-align:right;font-size:18px;color:#1a1a1a">1:06 AM</div>
<div class="t" style="left:1775px;top:1047px;width:80px;text-align:right;font-size:18.700px;color:#1a1a1a">8/8/2025</div>
<svg style="left:1867px;top:1030px" width="24" height="28" viewBox="0 0 24 28"><path d="M10.500 3c5 0 7.500 3.500 7.500 8 0 4 1 6 2.500 8 .5.800 0 1.500-.8 1.500H1.300c-.8 0-1.300-.7-.8-1.500C2 17 3 15 3 11c0-4.500 2.500-8 7.500-8z" fill="#111"/><path d="M7.500 23h6l-1 2.500h-4z" fill="#111"/><text x="5" y="17" font-family="Liberation Sans,sans-serif" font-size="11" font-weight="bold" fill="#fff">z</text><text x="16" y="8" font-family="Liberation Sans,sans-serif" font-size="10" font-weight="bold" fill="#111">z</text></svg>
</body></html>
